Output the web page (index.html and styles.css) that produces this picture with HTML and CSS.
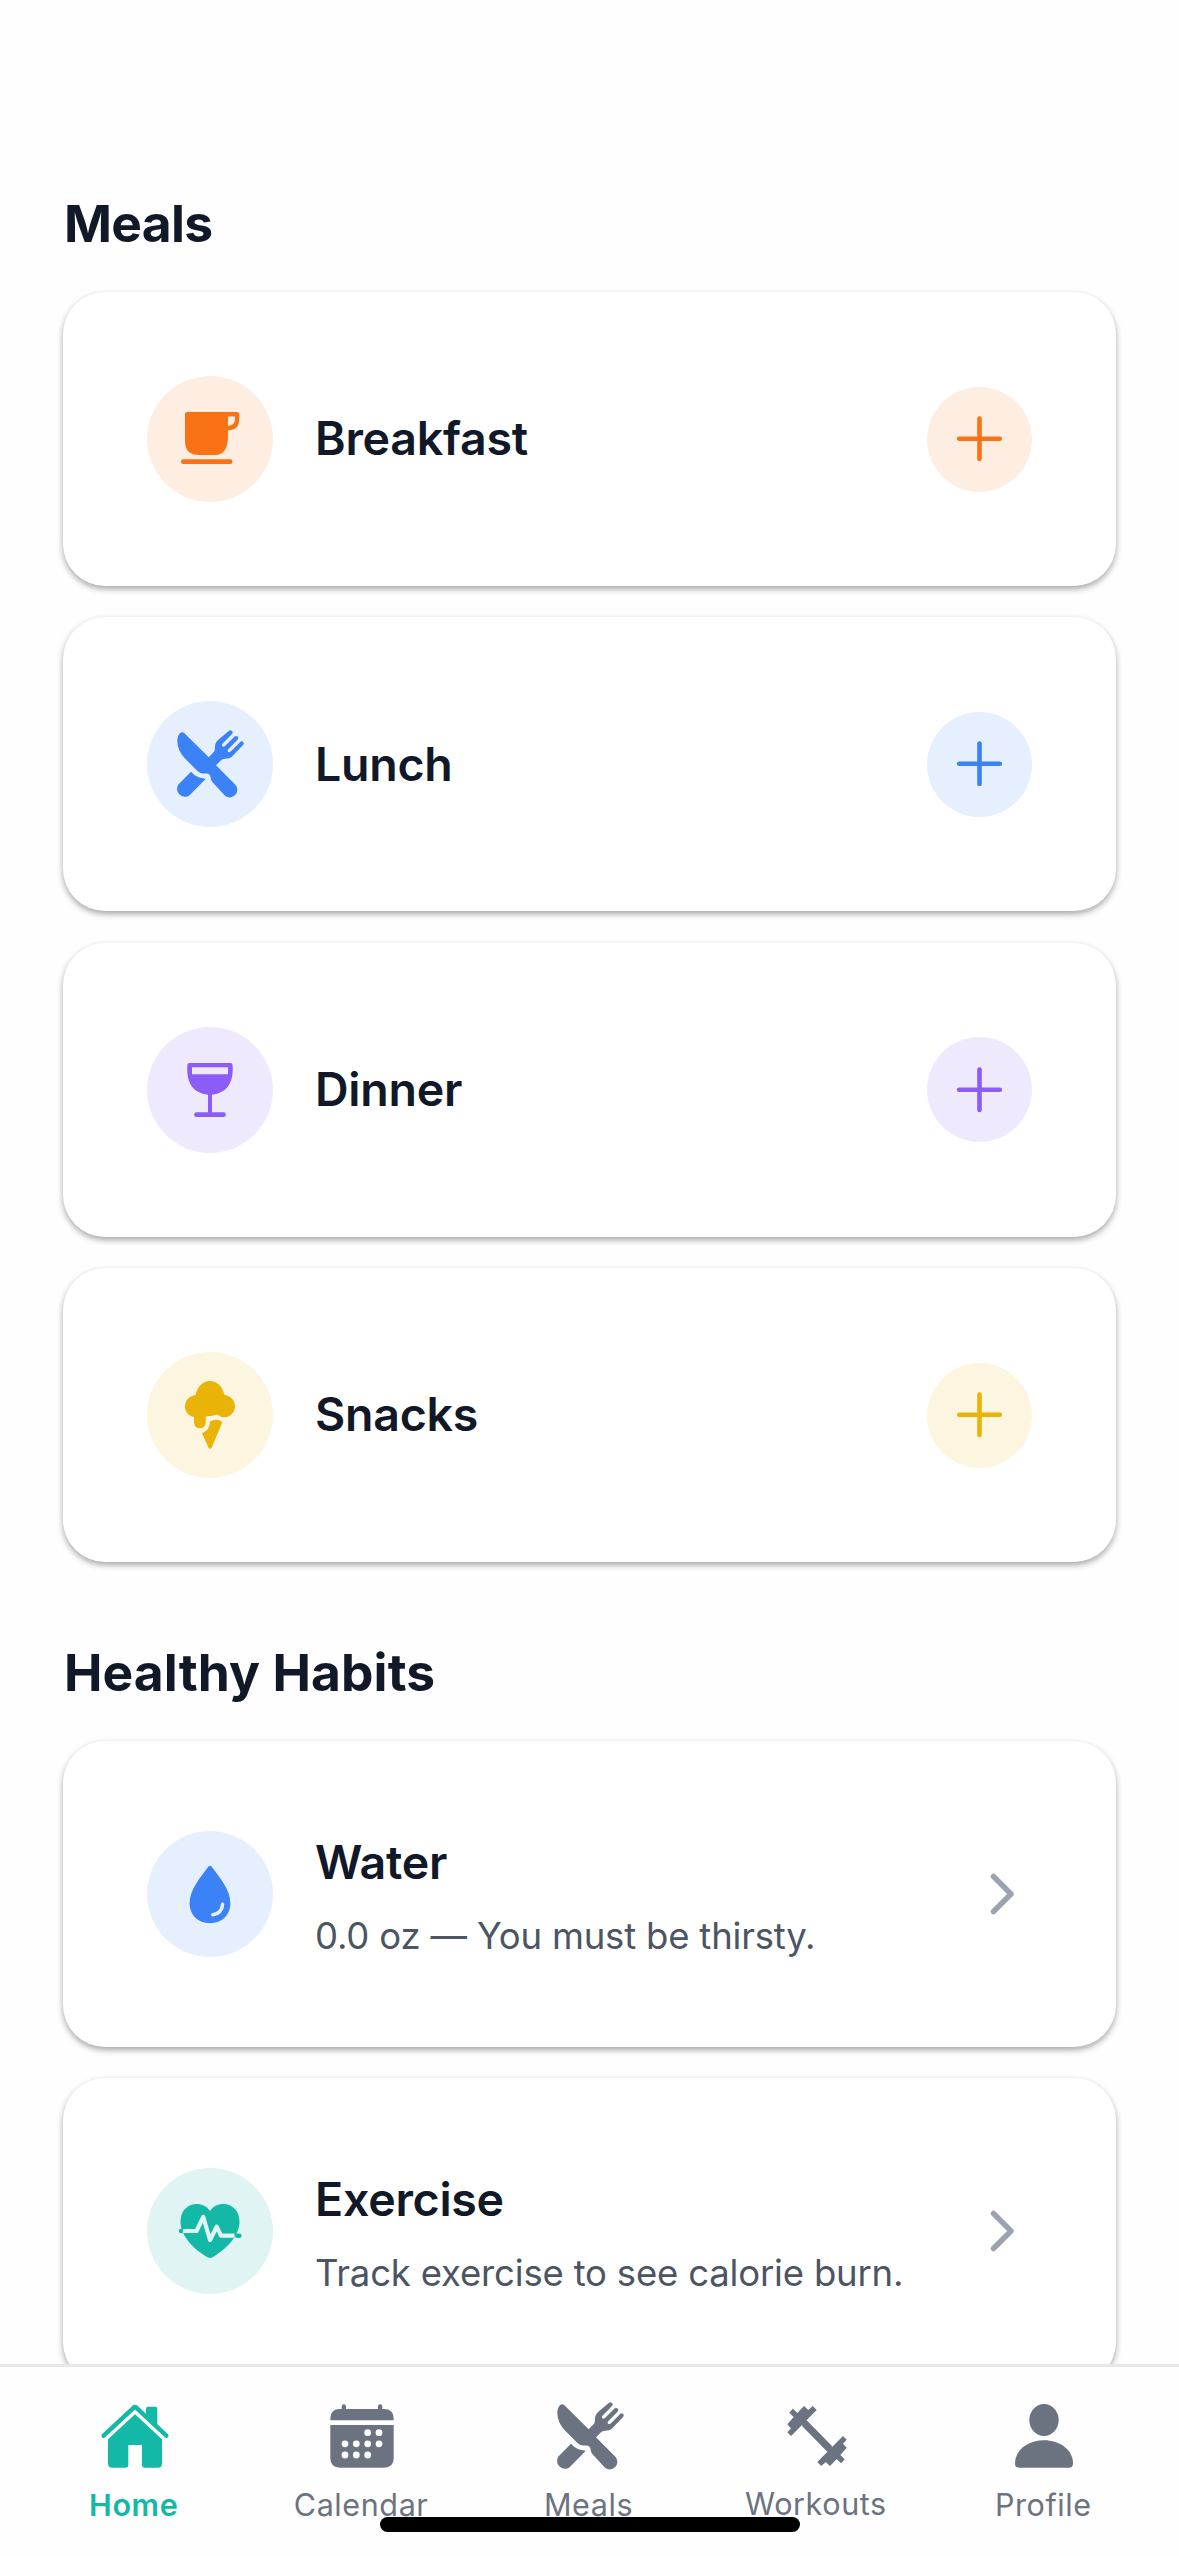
FILE: index.html
```html
<!DOCTYPE html>
<html lang="en">
<head>
    <meta charset="UTF-8">
    <meta name="viewport" content="width=device-width, initial-scale=1.0">
    <title>Home</title>
    <link rel="stylesheet" href="styles.css">
</head>
<body>
    <!-- Shared icons -->
    <svg class="sprite" width="0" height="0">
        <symbol id="icon-plus" viewBox="0 0 72 72">
            <path d="M35.5 15.5V56M15.2 35.7H55.8" fill="none" stroke="currentColor" stroke-width="4.6" stroke-linecap="round"/>
        </symbol>
        <symbol id="icon-cutlery" viewBox="0 0 72 72">
            <path d="M10.2 5L34.7 29.3L39.8 24Q41 22.8 40.9 20.5Q40.5 15.5 44.3 11.8L54.8 2.9Q56.5 1.7 58 2.9Q59.4 4.3 58 6.1L48.5 15.7Q47.3 17.2 48.4 18.3Q49.6 19.2 51 18L60.5 8.6Q62.2 7.3 63.7 8.6Q64.9 10 63.6 11.8L54.3 21.2Q53 22.6 54.1 23.7Q55.3 24.7 56.7 23.4L66.2 13.9Q67.9 12.8 69.3 14Q70.3 15.4 69.1 17L59 27.5Q56.5 30.7 51 30.8Q48.5 30.8 47 32.3L42 37.3L61.6 56.9A7.6 7.6 0 0 1 51 67.7L38.8 54.5Q36.6 52 36.5 49Q36 45.8 32.5 45.5H29.5Q26 45.5 23.5 43L10.5 30Q3 21.5 3.3 12Q3.8 7 6.2 5Q8.2 3.4 10.2 5Z"/>
            <path d="M17 43.8Q22.5 50.2 31.8 50.7L15.6 67.3A7.9 7.9 0 0 1 4.4 56.5Z"/>
        </symbol>
        <symbol id="icon-chevron" viewBox="0 0 60 60">
            <path d="M21.5 12.5L39 30L21.5 47.5" fill="none" stroke="currentColor" stroke-width="5.5" stroke-linecap="round" stroke-linejoin="round"/>
        </symbol>
    </svg>

    <main class="content">
        <h2>Meals</h2>

        <div class="card orange">
            <div class="icon-circle">
                <svg class="icon" viewBox="0 0 72 72">
                    <path d="M13 9H62.5Q65.3 9 65.3 12V15.5Q65.3 27.3 54 27.3V33Q54 52 41 52H25Q11 52 11 38V11Q11 9 13 9ZM54 13.4V22.8Q61 22.8 61 15.5V13.4Z"/>
                    <rect x="7" y="56.3" width="51.5" height="4.7" rx="2.3"/>
                </svg>
            </div>
            <h3>Breakfast</h3>
            <button class="add-button"><svg class="icon"><use href="#icon-plus"/></svg></button>
        </div>

        <div class="card blue">
            <div class="icon-circle">
                <svg class="icon"><use href="#icon-cutlery"/></svg>
            </div>
            <h3>Lunch</h3>
            <button class="add-button"><svg class="icon"><use href="#icon-plus"/></svg></button>
        </div>

        <div class="card purple">
            <div class="icon-circle">
                <svg class="icon" viewBox="0 0 72 72">
                    <path fill-rule="evenodd" d="M15.3 9H56.7Q58.5 9 58.6 11C59.8 29 53 39 38 40.7V58.3H49.5A2.35 2.35 0 0 1 49.5 63H22.5A2.35 2.35 0 0 1 22.5 58.3H34V40.7C19 39 12.2 29 13.4 11Q13.5 9 15.3 9ZM18 13.3V20.3H54V13.3Z"/>
                </svg>
            </div>
            <h3>Dinner</h3>
            <button class="add-button"><svg class="icon"><use href="#icon-plus"/></svg></button>
        </div>

        <div class="card yellow">
            <div class="icon-circle">
                <svg class="icon" viewBox="0 0 72 72">
                    <path d="M21.5 15.9C23.4 7.5 29 2 36 2S48.6 7.5 50.5 15.9C56.5 16.5 61 21.3 61 27.3C61 33.5 56 38.3 50 38.3C46 38.3 45.5 35.7 42.5 35.7C39.5 35.7 38.5 37.3 34.5 37Q31.7 37 31.7 39.5V43.5A5.85 5.85 0 0 1 20 43.5V38C14.5 37.2 11 32.8 11 27.3C11 21.3 15.5 16.5 21.5 15.9Z"/>
                    <path d="M36 42.5Q42.5 39 48.4 43L37.9 68.3Q36.2 71.3 34.3 68.3L28 54.3Q36 51 36 42.5Z"/>
                </svg>
            </div>
            <h3>Snacks</h3>
            <button class="add-button"><svg class="icon"><use href="#icon-plus"/></svg></button>
        </div>

        <h2 class="habits-title">Healthy Habits</h2>

        <div class="card blue">
            <div class="icon-circle">
                <svg class="icon" viewBox="0 0 72 72">
                    <path d="M34.5 8.6Q36 7 37.5 8.6C46 20 56.4 32 56.4 45.3C56.4 57 48 65.3 36 65.3S15.6 57 15.6 45.3C15.6 32 26 20 34.5 8.6Z"/>
                    <path class="cutout" d="M48.6 46.2Q47.8 56 38.8 56.7" stroke-width="3.5" stroke-linecap="round"/>
                </svg>
            </div>
            <div class="card-text">
                <h3>Water</h3>
                <p>0.0 oz — You must be thirsty.</p>
            </div>
            <svg class="chevron"><use href="#icon-chevron"/></svg>
        </div>

        <div class="card teal">
            <div class="icon-circle">
                <svg class="icon" viewBox="0 0 72 72">
                    <path d="M36 16C39.5 11 44 9 49 9C59 9 65.5 16.5 65.5 26.5C65.5 41 52 54.5 38.5 62.2Q36 63.7 33.5 62.2C20 54.5 6.5 41 6.5 26.5C6.5 16.5 13 9 23 9C28 9 32.5 11 36 16Z"/>
                    <rect x="4.8" y="33.7" width="6" height="4.6" rx="2.3"/>
                    <rect x="61" y="38.4" width="6.6" height="4.6" rx="2.3"/>
                    <path class="cutout" d="M9 36H22.5L29.3 22L36 45L42.7 31.7L47 40.7H60.5" stroke-width="4.2" stroke-linejoin="round"/>
                </svg>
            </div>
            <div class="card-text">
                <h3>Exercise</h3>
                <p>Track exercise to see calorie burn.</p>
            </div>
            <svg class="chevron"><use href="#icon-chevron"/></svg>
        </div>
    </main>

    <nav class="tab-bar">
        <a class="tab active">
            <svg class="icon" viewBox="0 0 72 72">
                <path d="M4.7 35.6L34.5 7.8Q36 6.4 37.5 7.8L67.3 35.6" fill="none" stroke="currentColor" stroke-width="4.5" stroke-linecap="round" stroke-linejoin="round"/>
                <path d="M47 14V8.7Q47 6.7 49 6.7H56.5Q58.3 6.7 58.3 8.7V27Z"/>
                <path d="M36 14.3L63 39.3V63.5Q63 67.7 58.8 67.7H45.3Q43 67.7 43 65.3V45H29.3V65.3Q29.3 67.7 27 67.7H13.2Q9 67.7 9 63.5V39.3Z"/>
            </svg>
            <span>Home</span>
        </a>
        <a class="tab">
            <svg class="icon" viewBox="0 0 72 72">
                <path d="M4.3 20.3V18.5Q4.3 9 14 9H15.7V6.5A2.15 2.15 0 0 1 20 6.5V9H52V6.5A2.15 2.15 0 0 1 56.3 6.5V9H58Q67.7 9 67.7 18.5V20.3Z"/>
                <path d="M4.3 25H67.7V58Q67.7 67.7 58 67.7H14Q4.3 67.7 4.3 58Z"/>
                <g fill="#fefefe">
                    <circle cx="41.7" cy="32.7" r="3.4"/>
                    <circle cx="53" cy="32.7" r="3.4"/>
                    <circle cx="19" cy="43.8" r="3.4"/>
                    <circle cx="30.3" cy="43.8" r="3.4"/>
                    <circle cx="41.7" cy="43.8" r="3.4"/>
                    <circle cx="53" cy="43.8" r="3.4"/>
                    <circle cx="19" cy="55" r="3.4"/>
                    <circle cx="30.3" cy="55" r="3.4"/>
                    <circle cx="41.7" cy="55" r="3.4"/>
                </g>
            </svg>
            <span>Calendar</span>
        </a>
        <a class="tab">
            <svg class="icon"><use href="#icon-cutlery"/></svg>
            <span>Meals</span>
        </a>
        <a class="tab workouts">
            <svg class="icon" viewBox="0 0 72 72">
                <path id="plate" d="M23 6L27.3 10L31.7 6L35.7 10L25.5 20.3L51 46L46 51L21 25L10 36L6.3 32.3L10 28.3L6.3 24.3L12.7 17L8.3 12.7L11.9 8.7L16.3 12.9Z"/>
                <use href="#plate" transform="rotate(180 36 36)"/>
            </svg>
            <span>Workouts</span>
        </a>
        <a class="tab">
            <svg class="icon" viewBox="0 0 72 72">
                <ellipse cx="36" cy="20" rx="14.7" ry="16"/>
                <path d="M36 40.3C52 40.3 65 50 65 63.5Q65 67.7 60.8 67.7H11.2Q7 67.7 7 63.5C7 50 20 40.3 36 40.3Z"/>
            </svg>
            <span>Profile</span>
        </a>
        <div class="home-indicator"></div>
    </nav>
</body>
</html>
```
FILE: styles.css
```css
* {
    margin: 0;
    padding: 0;
    box-sizing: border-box;
    font-family: Inter, 'Liberation Sans', sans-serif;
}

body {
    display: flex;
    flex-direction: column;
    height: 2556px;
    background: #fefefe;
    color: #111827;
    overflow: hidden;
}

.sprite {
    position: absolute;
}

.content {
    flex: 1;
    min-height: 0;
    padding: 180.5px 63px 0;
    overflow: hidden;
}

h2 {
    padding-left: 1px;
    font-size: 51.5px;
    font-weight: 700;
    line-height: 84px;
    letter-spacing: -0.7px;
    margin-bottom: 27.5px;
}

.habits-title {
    margin-top: 67.5px;
    letter-spacing: 0.1px;
}

.card {
    display: flex;
    align-items: center;
    gap: 42px;
    padding: 84px;
    background: #fff;
    border-radius: 42px;
    box-shadow: 0 3px 6px rgba(0, 0, 0, 0.35);
}

.card + .card {
    margin-top: 31.4px;
}

.icon {
    width: 72px;
    height: 72px;
    fill: currentColor;
    flex-shrink: 0;
}

.icon-circle {
    display: flex;
    align-items: center;
    justify-content: center;
    width: 126px;
    height: 126px;
    border-radius: 50%;
}

.add-button {
    display: flex;
    align-items: center;
    justify-content: center;
    width: 105px;
    height: 105px;
    margin-left: auto;
    border: none;
    border-radius: 50%;
}

h3 {
    font-size: 46.5px;
    font-weight: 600;
    line-height: 75.5px;
    letter-spacing: -0.25px;
}

.card-text p {
    margin-top: 9.5px;
    font-size: 36.5px;
    line-height: 52.5px;
    letter-spacing: -0.18px;
    color: #4b5563;
}

.chevron {
    width: 60px;
    height: 60px;
    margin-left: auto;
    color: #9ca3af;
}

/* Card colors */
.orange .icon-circle,
.orange .add-button {
    background: #feede1;
    color: #f97316;
}

.blue .icon-circle,
.blue .add-button {
    background: #e5effe;
    color: #3b82f6;
}

.purple .icon-circle,
.purple .add-button {
    background: #efe9fe;
    color: #8b5cf6;
}

.yellow .icon-circle,
.yellow .add-button {
    background: #fcf5e0;
    color: #eab308;
}

.teal .icon-circle {
    background: #e0f5f3;
    color: #14b8a6;
}

.cutout {
    fill: none;
    stroke: #e5effe;
}

.teal .cutout {
    stroke: #e0f5f3;
}

.tab-bar {
    display: flex;
    position: relative;
    height: 192px;
    padding: 33px 21px 0;
    background: #fefefe;
    border-top: 3px solid #e5e7eb;
}

.tab {
    flex: 1;
    display: flex;
    flex-direction: column;
    align-items: center;
    gap: 12px;
    font-size: 30.5px;
    line-height: 42px;
    letter-spacing: 0.6px;
    color: #6b7280;
}

.tab span {
    margin-right: 2px;
}

.tab.active {
    color: #14b8a6;
    font-weight: 600;
}

.workouts {
    gap: 11px;
}

.home-indicator {
    position: absolute;
    left: 380px;
    bottom: 24px;
    width: 420px;
    height: 15px;
    border-radius: 8px;
    background: #000;
}
```
